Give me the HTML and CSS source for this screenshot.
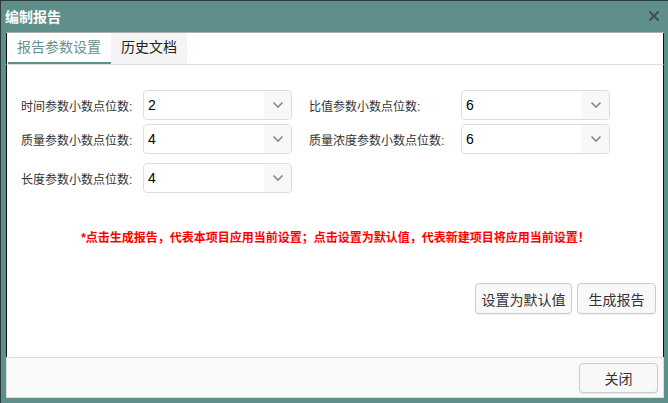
FILE: index.html
```html
<!DOCTYPE html>
<html lang="zh">
<head>
<meta charset="utf-8">
<link rel="stylesheet" href="styles.css">
</head>
<body>
<div class="window">
  <div class="titlebar">
    <span class="title">编制报告</span>
    <span class="close-x"><svg width="10" height="10" viewBox="0 0 10 10"><path d="M1 1L9 9M9 1L1 9" stroke="#454f4e" stroke-width="2.2" stroke-linecap="square"/></svg></span>
  </div>
  <div class="panel">
    <div class="tabs">
      <div class="tab active">报告参数设置</div>
      <div class="tab">历史文档</div>
    </div>
    <div class="body">
      <div class="form">
        <div class="row r1">
          <label class="lab">时间参数小数点位数:</label>
          <div class="sel"><span class="val">2</span><span class="arrow"><svg width="12" height="8" viewBox="0 0 12 8"><path d="M1.5 1.5L6 6L10.5 1.5" fill="none" stroke="#888" stroke-width="1.6"/></svg></span></div>
          <label class="lab lab2">比值参数小数点位数:</label>
          <div class="sel"><span class="val">6</span><span class="arrow"><svg width="12" height="8" viewBox="0 0 12 8"><path d="M1.5 1.5L6 6L10.5 1.5" fill="none" stroke="#888" stroke-width="1.6"/></svg></span></div>
        </div>
        <div class="row r2">
          <label class="lab">质量参数小数点位数:</label>
          <div class="sel"><span class="val">4</span><span class="arrow"><svg width="12" height="8" viewBox="0 0 12 8"><path d="M1.5 1.5L6 6L10.5 1.5" fill="none" stroke="#888" stroke-width="1.6"/></svg></span></div>
          <label class="lab lab2">质量浓度参数小数点位数:</label>
          <div class="sel"><span class="val">6</span><span class="arrow"><svg width="12" height="8" viewBox="0 0 12 8"><path d="M1.5 1.5L6 6L10.5 1.5" fill="none" stroke="#888" stroke-width="1.6"/></svg></span></div>
        </div>
        <div class="row r3">
          <label class="lab">长度参数小数点位数:</label>
          <div class="sel"><span class="val">4</span><span class="arrow"><svg width="12" height="8" viewBox="0 0 12 8"><path d="M1.5 1.5L6 6L10.5 1.5" fill="none" stroke="#888" stroke-width="1.6"/></svg></span></div>
        </div>
      </div>
      <p class="note">*点击生成报告，代表本项目应用当前设置；点击设置为默认值，代表新建项目将应用当前设置！</p>
      <div class="actions">
        <button class="btn btn-wide">设置为默认值</button>
        <button class="btn">生成报告</button>
      </div>
    </div>
    <div class="footer">
      <button class="btn btn-close">关闭</button>
    </div>
  </div>
</div>
</body>
</html>
```

FILE: styles.css
```css
html, body {
  margin: 0;
  padding: 0;
}
body {
  font-family: "Liberation Sans", "Noto Sans CJK SC", sans-serif;
  background: #5f8f8b;
}
.window {
  width: 668px;
  height: 403px;
  box-sizing: border-box;
  background: #5f8f8b;
  border-top: 1px solid #2a3b3a;
  border-left: 1px solid #2a3b3a;
  display: flex;
  flex-direction: column;
}
.titlebar {
  height: 31px;
  display: flex;
  align-items: center;
  justify-content: space-between;
  padding: 0 9px 0 4px;
}
.title {
  color: #fff;
  font-weight: bold;
  font-size: 14px;
  margin-top: -1px;
}
.close-x {
  display: flex;
  margin-top: -1px;
}
.panel {
  margin: 0 4px 5px 5px;
  flex: 1;
  display: flex;
  flex-direction: column;
  background: #fff;
  border-top: 1px solid #a9b0af;
}
.tabs {
  display: flex;
  height: 31px;
  border-bottom: 1px solid #ddd;
  border-left: 1px solid #111;
  border-right: 1px solid #111;
}
.tab {
  font-size: 14px;
  line-height: 29px;
  padding: 0 10px;
  color: #222;
  background: #f4f4f4;
  border-bottom: 2px solid transparent;
}
.tab.active {
  color: #6b8f8c;
  background: #fff;
  border-bottom-color: #5f8f8b;
  padding-left: 9px;
  margin-left: 1px;
}
.body {
  flex: 1;
  border-left: 1px solid #111;
  border-right: 1px solid #111;
  display: flex;
  flex-direction: column;
  padding: 25px 7px 0 14px;
}
.form {
  display: flex;
  flex-direction: column;
}
.row {
  display: flex;
  align-items: center;
}
.r2 { margin-top: 4px; }
.r3 { margin-top: 9px; }
.lab {
  font-size: 12px;
  color: #333;
  width: 122px;
  flex: none;
}
.lab2 {
  width: 152px;
  margin-left: 17px;
}
.sel {
  width: 149px;
  height: 30px;
  box-sizing: border-box;
  border: 1px solid #ddd;
  border-radius: 4px;
  display: flex;
  align-items: center;
  overflow: hidden;
  background: #fff;
}
.val {
  flex: 1;
  font-size: 14px;
  color: #000;
  padding-left: 4px;
}
.arrow {
  width: 27px;
  height: 100%;
  background: #f8f8f8;
  display: flex;
  align-items: center;
  justify-content: center;
}
.note {
  margin: 35px 0 0 0;
  text-align: center;
  color: #f00;
  font-weight: bold;
  font-size: 12px;
  padding-right: 6px;
}
.actions {
  margin-top: 38px;
  display: flex;
  justify-content: flex-end;
  gap: 5px;
}
.btn {
  font-family: "Liberation Sans", "Noto Sans CJK SC", sans-serif;
  font-size: 14px;
  color: #333;
  background: #f8f8f8;
  border: 1px solid #ccc;
  border-radius: 4px;
  height: 31px;
  width: 79px;
  padding: 0;
  box-shadow: 0 1px 1px rgba(0,0,0,0.08);
}
.btn-wide {
  width: 97px;
}
.footer {
  height: 41px;
  box-sizing: border-box;
  background: #f9f9f9;
  border: 1px solid #ddd;
  display: flex;
  align-items: center;
  justify-content: flex-end;
  padding-right: 5px;
}
.btn-close {
  height: 30px;
}
```
